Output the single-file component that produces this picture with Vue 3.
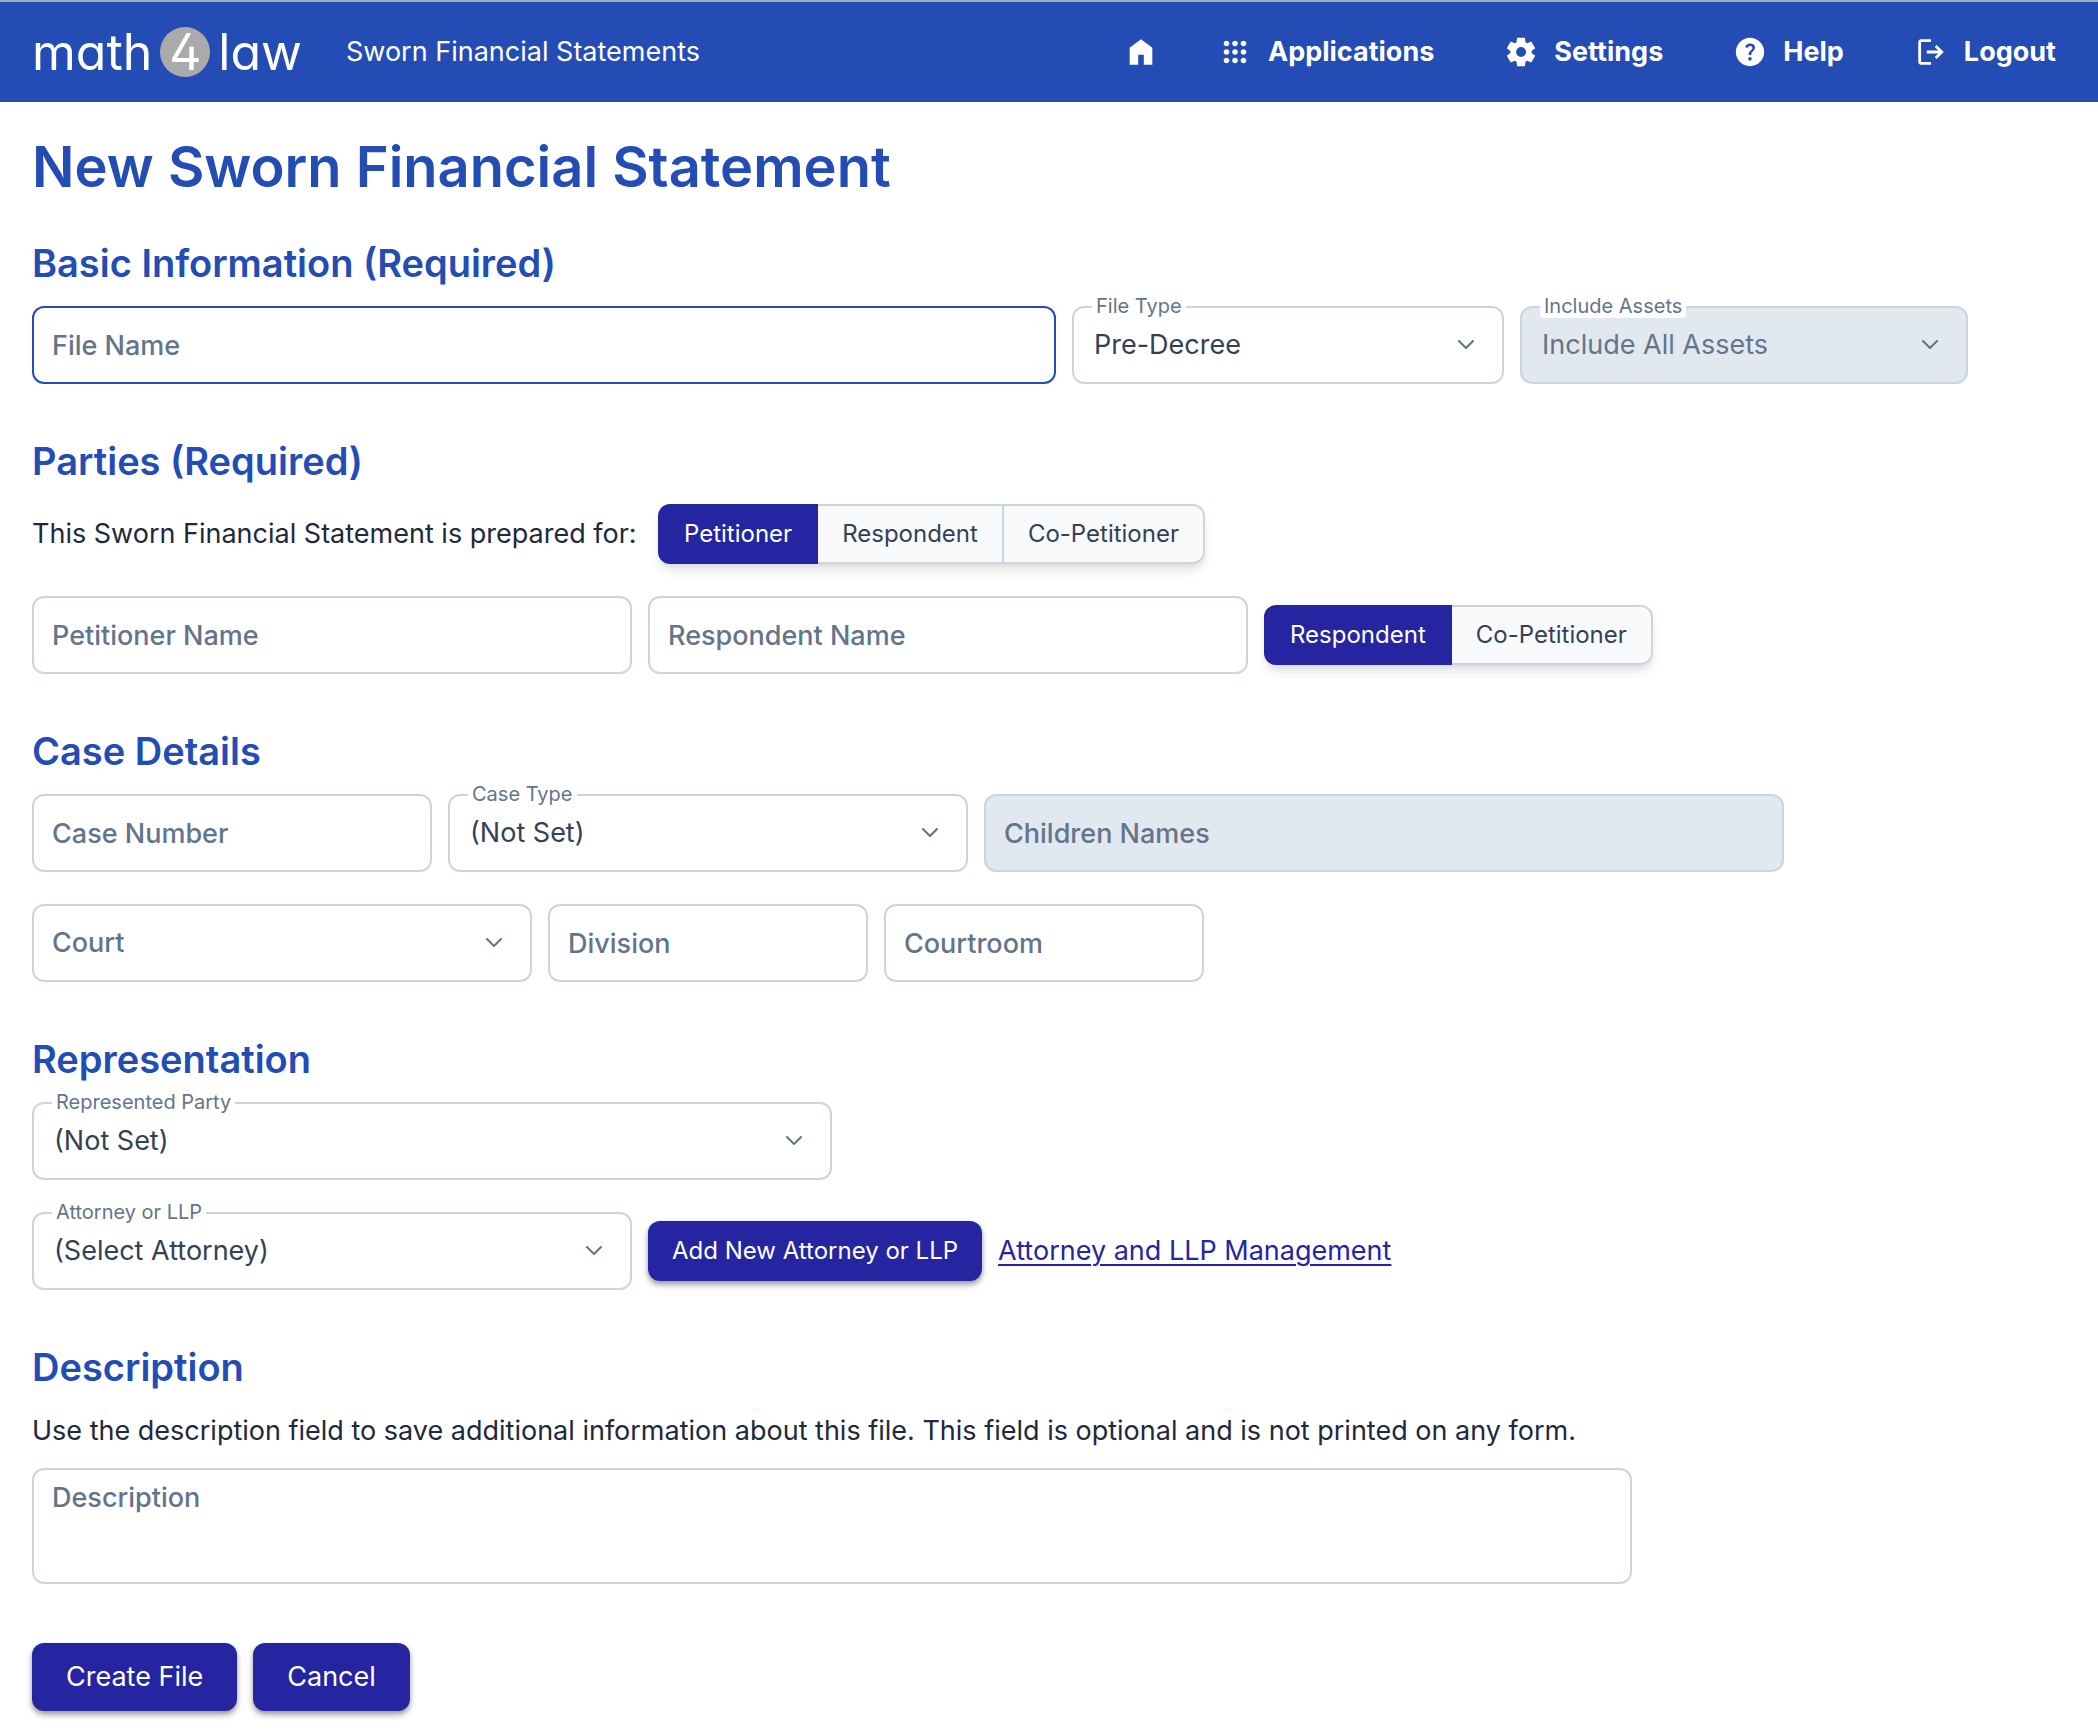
<script setup>
import { ref } from 'vue'

// Material icon paths (24x24)
const icons = {
  home: 'M4 21V9l8-6l8 6v12h-6v-7h-4v7z',
  apps: 'M6 20q-.825 0-1.412-.587T4 18t.588-1.412T6 16t1.413.588T8 18t-.587 1.413T6 20m6 0q-.825 0-1.412-.587T10 18t.588-1.412T12 16t1.413.588T14 18t-.587 1.413T12 20m6 0q-.825 0-1.412-.587T16 18t.588-1.412T18 16t1.413.588T20 18t-.587 1.413T18 20M6 14q-.825 0-1.412-.587T4 12t.588-1.412T6 10t1.413.588T8 12t-.587 1.413T6 14m6 0q-.825 0-1.412-.587T10 12t.588-1.412T12 10t1.413.588T14 12t-.587 1.413T12 14m6 0q-.825 0-1.412-.587T16 12t.588-1.412T18 10t1.413.588T20 12t-.587 1.413T18 14M6 8q-.825 0-1.412-.587T4 6t.588-1.412T6 4t1.413.588T8 6t-.587 1.413T6 8m6 0q-.825 0-1.412-.587T10 6t.588-1.412T12 4t1.413.588T14 6t-.587 1.413T12 8m6 0q-.825 0-1.412-.587T16 6t.588-1.412T18 4t1.413.588T20 6t-.587 1.413T18 8',
  settings: 'm9.25 22l-.4-3.2q-.325-.125-.612-.3t-.563-.375L4.7 19.375l-2.75-4.75l2.575-1.95Q4.5 12.5 4.5 12.338v-.675q0-.163.025-.338L1.95 9.375l2.75-4.75l2.975 1.25q.275-.2.575-.375t.6-.3l.4-3.2h5.5l.4 3.2q.325.125.613.3t.562.375l2.975-1.25l2.75 4.75l-2.575 1.95q.025.175.025.338v.674q0 .163-.05.338l2.575 1.95l-2.75 4.75l-2.95-1.25q-.275.2-.575.375t-.6.3l-.4 3.2zm2.8-6.5q1.45 0 2.475-1.025T15.55 12t-1.025-2.475T12.05 8.5q-1.475 0-2.488 1.025T8.55 12t1.013 2.475T12.05 15.5',
  help: 'M11.95 18q.525 0 .888-.363t.362-.887t-.362-.888t-.888-.362t-.887.363t-.363.887t.363.888t.887.362m-.9-3.85h1.85q0-.825.188-1.3t1.062-1.3q.65-.65 1.025-1.238T15.55 8.9q0-1.4-1.025-2.15T12.1 6q-1.425 0-2.312.75T8.55 8.55l1.65.65q.125-.45.563-.975T12.1 7.7q.8 0 1.2.438t.4.962q0 .5-.3.938t-.75.812q-1.1.975-1.35 1.475t-.25 1.825M12 22q-2.075 0-3.9-.787t-3.175-2.138T2.788 15.9T2 12t.788-3.9t2.137-3.175T8.1 2.788T12 2t3.9.788t3.175 2.137T21.213 8.1T22 12t-.788 3.9t-2.137 3.175t-3.175 2.138T12 22',
  logout: 'M5 21q-.825 0-1.412-.587T3 19V5q0-.825.588-1.412T5 3h7v2H5v14h7v2zm11-4l-1.375-1.45l2.55-2.55H9v-2h8.175l-2.55-2.55L16 7l5 5z',
}

const navItems = [
  { icon: 'apps', label: 'Applications' },
  { icon: 'settings', label: 'Settings' },
  { icon: 'help', label: 'Help' },
  { icon: 'logout', label: 'Logout' },
]

const preparedOptions = ['Petitioner', 'Respondent', 'Co-Petitioner']
const otherOptions = ['Respondent', 'Co-Petitioner']

const preparedFor = ref('Petitioner')
const otherParty = ref('Respondent')

const form = ref({
  fileName: '',
  fileType: 'Pre-Decree',
  assets: 'Include All Assets',
  petitioner: '',
  respondent: '',
  caseNumber: '',
  caseType: '(Not Set)',
  children: '',
  court: '',
  division: '',
  courtroom: '',
  represented: '(Not Set)',
  attorney: '(Select Attorney)',
  description: '',
})
</script>

<template>
  <header class="topbar">
    <a href="#" class="logo" aria-label="math4law">
      <span>math</span><span class="logo-badge">4</span><span>law</span>
    </a>
    <span class="app-name">Sworn Financial Statements</span>
    <nav class="nav" aria-label="Main">
      <a href="#" aria-label="Home">
        <svg class="nav-icon" viewBox="0 0 24 24"><path :d="icons.home" /></svg>
      </a>
      <a v-for="item in navItems" :key="item.label" href="#" class="nav-link">
        <svg class="nav-icon" viewBox="0 0 24 24"><path :d="icons[item.icon]" /></svg>
        {{ item.label }}
      </a>
    </nav>
  </header>

  <main class="page">
    <h1>New Sworn Financial Statement</h1>

    <form @submit.prevent>
      <section>
        <h2>Basic Information (Required)</h2>
        <div class="row">
          <div class="field w-file">
            <input v-model="form.fileName" class="active" type="text" placeholder="File Name" aria-label="File Name" />
          </div>
          <div class="field w-type">
            <label for="file-type">File Type</label>
            <select id="file-type" v-model="form.fileType">
              <option>Pre-Decree</option>
              <option>Post-Decree</option>
            </select>
            <svg class="chevron" viewBox="0 0 16 10"><path d="M1 1l7 7l7-7" /></svg>
          </div>
          <div class="field w-assets">
            <label for="assets">Include Assets</label>
            <select id="assets" v-model="form.assets" disabled>
              <option>Include All Assets</option>
            </select>
            <svg class="chevron" viewBox="0 0 16 10"><path d="M1 1l7 7l7-7" /></svg>
          </div>
        </div>
      </section>

      <section>
        <h2>Parties (Required)</h2>
        <div class="row">
          <span id="prepared-for" class="prompt">This Sworn Financial Statement is prepared for:</span>
          <div class="toggle" role="radiogroup" aria-labelledby="prepared-for">
            <label v-for="o in preparedOptions" :key="o" :class="{ on: preparedFor === o }">
              <input v-model="preparedFor" type="radio" name="prepared" :value="o" />{{ o }}
            </label>
          </div>
        </div>
        <div class="row">
          <div class="field w-name">
            <input v-model="form.petitioner" type="text" placeholder="Petitioner Name" aria-label="Petitioner Name" />
          </div>
          <div class="field w-name">
            <input v-model="form.respondent" type="text" placeholder="Respondent Name" aria-label="Respondent Name" />
          </div>
          <div class="toggle" role="radiogroup" aria-label="Other party">
            <label v-for="o in otherOptions" :key="o" :class="{ on: otherParty === o }">
              <input v-model="otherParty" type="radio" name="other" :value="o" />{{ o }}
            </label>
          </div>
        </div>
      </section>

      <section>
        <h2>Case Details</h2>
        <div class="row">
          <div class="field w-number">
            <input v-model="form.caseNumber" type="text" placeholder="Case Number" aria-label="Case Number" />
          </div>
          <div class="field w-case">
            <label for="case-type">Case Type</label>
            <select id="case-type" v-model="form.caseType">
              <option>(Not Set)</option>
            </select>
            <svg class="chevron" viewBox="0 0 16 10"><path d="M1 1l7 7l7-7" /></svg>
          </div>
          <div class="field w-wide">
            <input v-model="form.children" type="text" placeholder="Children Names" aria-label="Children Names" disabled />
          </div>
        </div>
        <div class="row">
          <div class="field w-court">
            <select v-model="form.court" class="empty" aria-label="Court">
              <option value="">Court</option>
            </select>
            <svg class="chevron" viewBox="0 0 16 10"><path d="M1 1l7 7l7-7" /></svg>
          </div>
          <div class="field w-room">
            <input v-model="form.division" type="text" placeholder="Division" aria-label="Division" />
          </div>
          <div class="field w-room">
            <input v-model="form.courtroom" type="text" placeholder="Courtroom" aria-label="Courtroom" />
          </div>
        </div>
      </section>

      <section>
        <h2>Representation</h2>
        <div class="row">
          <div class="field w-wide">
            <label for="represented">Represented Party</label>
            <select id="represented" v-model="form.represented">
              <option>(Not Set)</option>
            </select>
            <svg class="chevron" viewBox="0 0 16 10"><path d="M1 1l7 7l7-7" /></svg>
          </div>
        </div>
        <div class="row">
          <div class="field w-name">
            <label for="attorney">Attorney or LLP</label>
            <select id="attorney" v-model="form.attorney">
              <option>(Select Attorney)</option>
            </select>
            <svg class="chevron" viewBox="0 0 16 10"><path d="M1 1l7 7l7-7" /></svg>
          </div>
          <button type="button" class="btn btn-small">Add New Attorney or LLP</button>
          <a href="#" class="link">Attorney and LLP Management</a>
        </div>
      </section>

      <section>
        <h2>Description</h2>
        <p>Use the description field to save additional information about this file. This field is optional and is not printed on any form.</p>
        <textarea v-model="form.description" placeholder="Description" aria-label="Description"></textarea>
      </section>

      <div class="actions">
        <button type="submit" class="btn">Create File</button>
        <button type="button" class="btn">Cancel</button>
      </div>
    </form>
  </main>
</template>

<style>
body { background: #fff; }
</style>

<style scoped>
.topbar, .page {
  font-family: Inter, "Liberation Sans", sans-serif;
  font-size: 27px; line-height: 42px; color: #1e293b;
}

/* Header */
.topbar {
  display: flex; align-items: center; box-sizing: border-box;
  min-height: 102px; padding: 0 32px;
  background: #234cb4; border-top: 2px solid #9ab1b8; color: #fff;
}
.topbar a { color: inherit; text-decoration: none; }
.logo {
  display: flex; align-items: center; gap: 8px; margin-right: 44px;
  font-size: 50px; line-height: 60px; font-weight: 400;
  font-feature-settings: "cv11", "cv02";
}
.logo-badge {
  display: flex; align-items: center; justify-content: center;
  width: 50px; height: 50px; border-radius: 50%; background: #aaa;
}
.nav { display: flex; align-items: center; gap: 60px; margin-left: auto; font-weight: 700; }
.nav a { display: flex; align-items: center; gap: 16px; }
.nav .nav-link { padding-right: 10px; }
.nav-icon { width: 34px; height: 34px; fill: currentColor; }

/* Form */
.page { padding: 24px 32px 20px; }
h1 { margin: 0 0 28px; font-size: 56px; line-height: 82px; font-weight: 600; color: #234cb4; }
h2 { margin: 0 0 16px; font-size: 38px; line-height: 54px; font-weight: 600; color: #234cb4; }
p { margin: 0 0 16px; }
section { margin-bottom: 50px; }
.row { display: flex; align-items: center; gap: 16px; }
.row + .row { margin-top: 32px; }
.prompt { min-width: 610px; }

.field { position: relative; min-width: 0; }
.w-file { flex: 0 1 1024px; }
.w-type { flex: 0 1 432px; }
.w-assets { flex: 0 1 448px; }
.w-name { flex: 0 1 600px; }
.w-number { flex: 0 1 400px; }
.w-case { flex: 0 1 520px; }
.w-wide { flex: 0 1 800px; }
.w-court { flex: 0 1 500px; }
.w-room { flex: 0 1 320px; }

.field input, .field select, textarea {
  display: block; box-sizing: border-box; width: 100%; height: 78px; margin: 0; padding: 0 18px;
  border: 2px solid #cbd5e1; border-radius: 12px; outline: none; background: #fff;
  font: inherit; color: #334155; appearance: none;
}
.field select { padding: 0 56px 0 20px; opacity: 1; }
.field select.empty { padding-left: 18px; font-weight: 500; color: #64748b; }
.field input.active, .field input:focus, .field select:focus, textarea:focus { border-color: #234cb4; }
.field input:disabled, .field select:disabled { background: #e2e8f0; color: #64748b; }
::placeholder { color: #64748b; font-weight: 500; opacity: 1; }
.field label {
  position: absolute; left: 20px; top: -12px; padding: 0 4px;
  border-radius: 4px; background: #fff; color: #64748b; font-size: 20px; line-height: 24px;
}
.chevron {
  position: absolute; right: 30px; top: 50%; width: 16px; height: 10px; margin-top: -5px;
  fill: none; stroke: #64748b; stroke-width: 2; stroke-linecap: round; stroke-linejoin: round;
  pointer-events: none;
}
.field textarea, textarea { max-width: 1600px; height: 116px; padding: 8px 18px; line-height: 40px; resize: none; }

/* Segmented radios */
.toggle {
  display: flex; border-radius: 12px; font-size: 24px; line-height: 56px; color: #334155;
  box-shadow: 0 8px 12px -2px rgba(0,0,0,0.1), 0 4px 8px -4px rgba(0,0,0,0.1);
}
.toggle label {
  padding: 0 24px; border: 2px solid #cbd5e1; border-left-width: 0;
  background: #f8fafc; white-space: nowrap; cursor: pointer;
}
.toggle label:first-child { border-radius: 12px 0 0 12px; border-left-width: 2px; }
.toggle label:last-child { border-radius: 0 12px 12px 0; }
.toggle label.on { background: #2525a2; border-color: #2525a2; color: #fff; }
.toggle input { position: absolute; opacity: 0; pointer-events: none; }

.btn {
  padding: 0 34px; border: 0; border-radius: 12px; background: #2525a2; color: #fff;
  font: inherit; line-height: 68px; white-space: nowrap; cursor: pointer;
  box-shadow: 0 4px 6px rgba(0,0,0,0.3), 0 2px 4px rgba(0,0,0,0.15);
}
.btn-small { padding: 0 24px; font-size: 24px; line-height: 60px; }
.link { color: #2525a2; text-decoration-thickness: 2px; text-underline-offset: 4px; }
.actions { display: flex; gap: 16px; margin-top: 59px; }
</style>
